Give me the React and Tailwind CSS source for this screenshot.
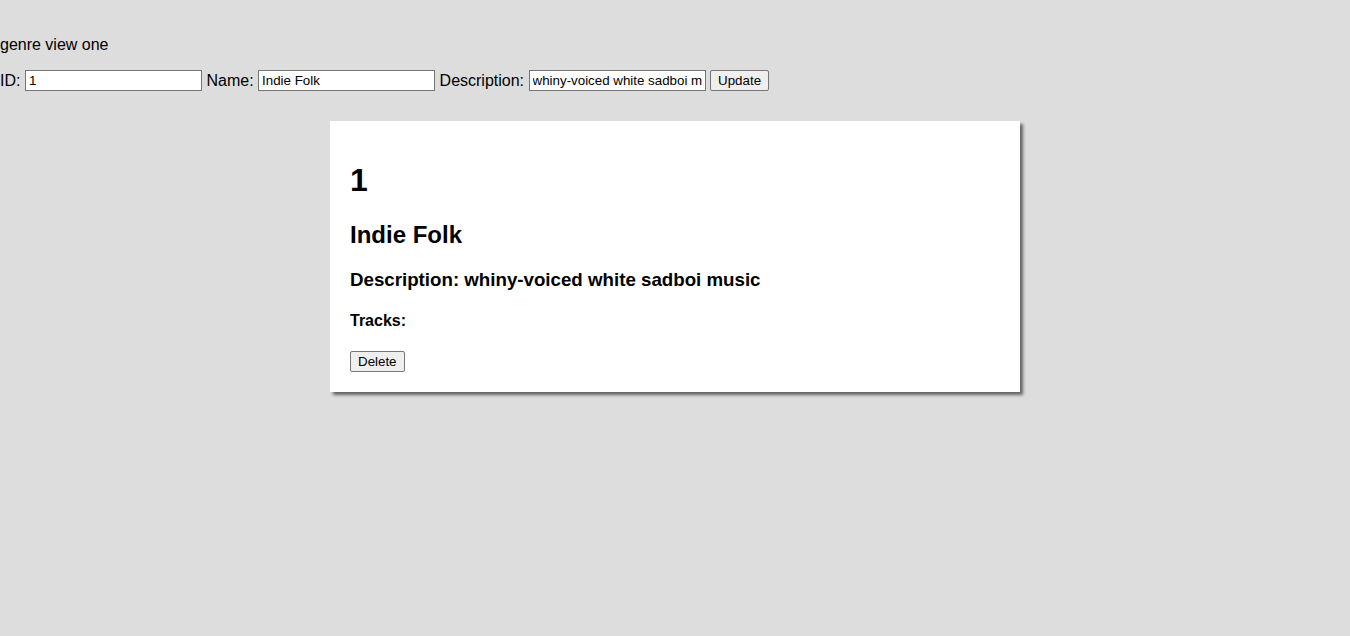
import React, { useState } from "react";

const GenreViewOne = () => {
  const [genre, setGenre] = useState({
    id: "1",
    name: "Indie Folk",
    description: "whiny-voiced white sadboi music",
  });

  const update = (key) => (e) => setGenre({ ...genre, [key]: e.target.value });

  return (
    <div className="min-h-screen bg-[#dddddd] text-black font-['Liberation_Sans',Arial,sans-serif] pt-[36px]">
      <p className="text-[16px] leading-[18px]">genre view one</p>

      {/* Edit form */}
      <form
        className="mt-[16px] flex items-center gap-[4.5px] text-[16px] h-[21px]"
        onSubmit={(e) => e.preventDefault()}
      >
        <label>ID:</label>
        <input
          value={genre.id}
          onChange={update("id")}
          className="w-[177px] h-[21px] bg-white border border-[#767676] px-[3px] text-[13.33px] outline-none"
        />
        <label>Name:</label>
        <input
          value={genre.name}
          onChange={update("name")}
          className="w-[177px] h-[21px] bg-white border border-[#767676] px-[3px] text-[13.33px] outline-none"
        />
        <label>Description:</label>
        <input
          value={genre.description}
          onChange={update("description")}
          className="w-[177px] h-[21px] bg-white border border-[#767676] px-[3px] text-[13.33px] outline-none"
        />
        <button
          type="submit"
          className="h-[21px] px-[7px] bg-[#efefef] border border-[#767676] rounded-[2px] text-[13.33px] leading-none"
        >
          Update
        </button>
      </form>

      {/* Genre card */}
      <div className="mt-[30px] mx-auto w-[690px] bg-white p-[20px] shadow-[3px_3px_3px_rgba(0,0,0,0.55)]">
        <h1 className="mt-[21.44px] text-[32px] font-bold leading-[37px]">{genre.id}</h1>
        <h2 className="mt-[21.44px] text-[24px] font-bold leading-[27.6px]">{genre.name}</h2>
        <h3 className="mt-[20.5px] text-[18.72px] font-bold leading-[21.5px]">
          Description: {genre.description}
        </h3>
        <h4 className="mt-[21.5px] text-[16px] font-bold leading-[18.4px]">Tracks:</h4>
        <button className="mt-[20.5px] block h-[21px] px-[7px] bg-[#efefef] border border-[#767676] rounded-[2px] text-[13.33px] leading-none">
          Delete
        </button>
      </div>
    </div>
  );
};

export default GenreViewOne;
